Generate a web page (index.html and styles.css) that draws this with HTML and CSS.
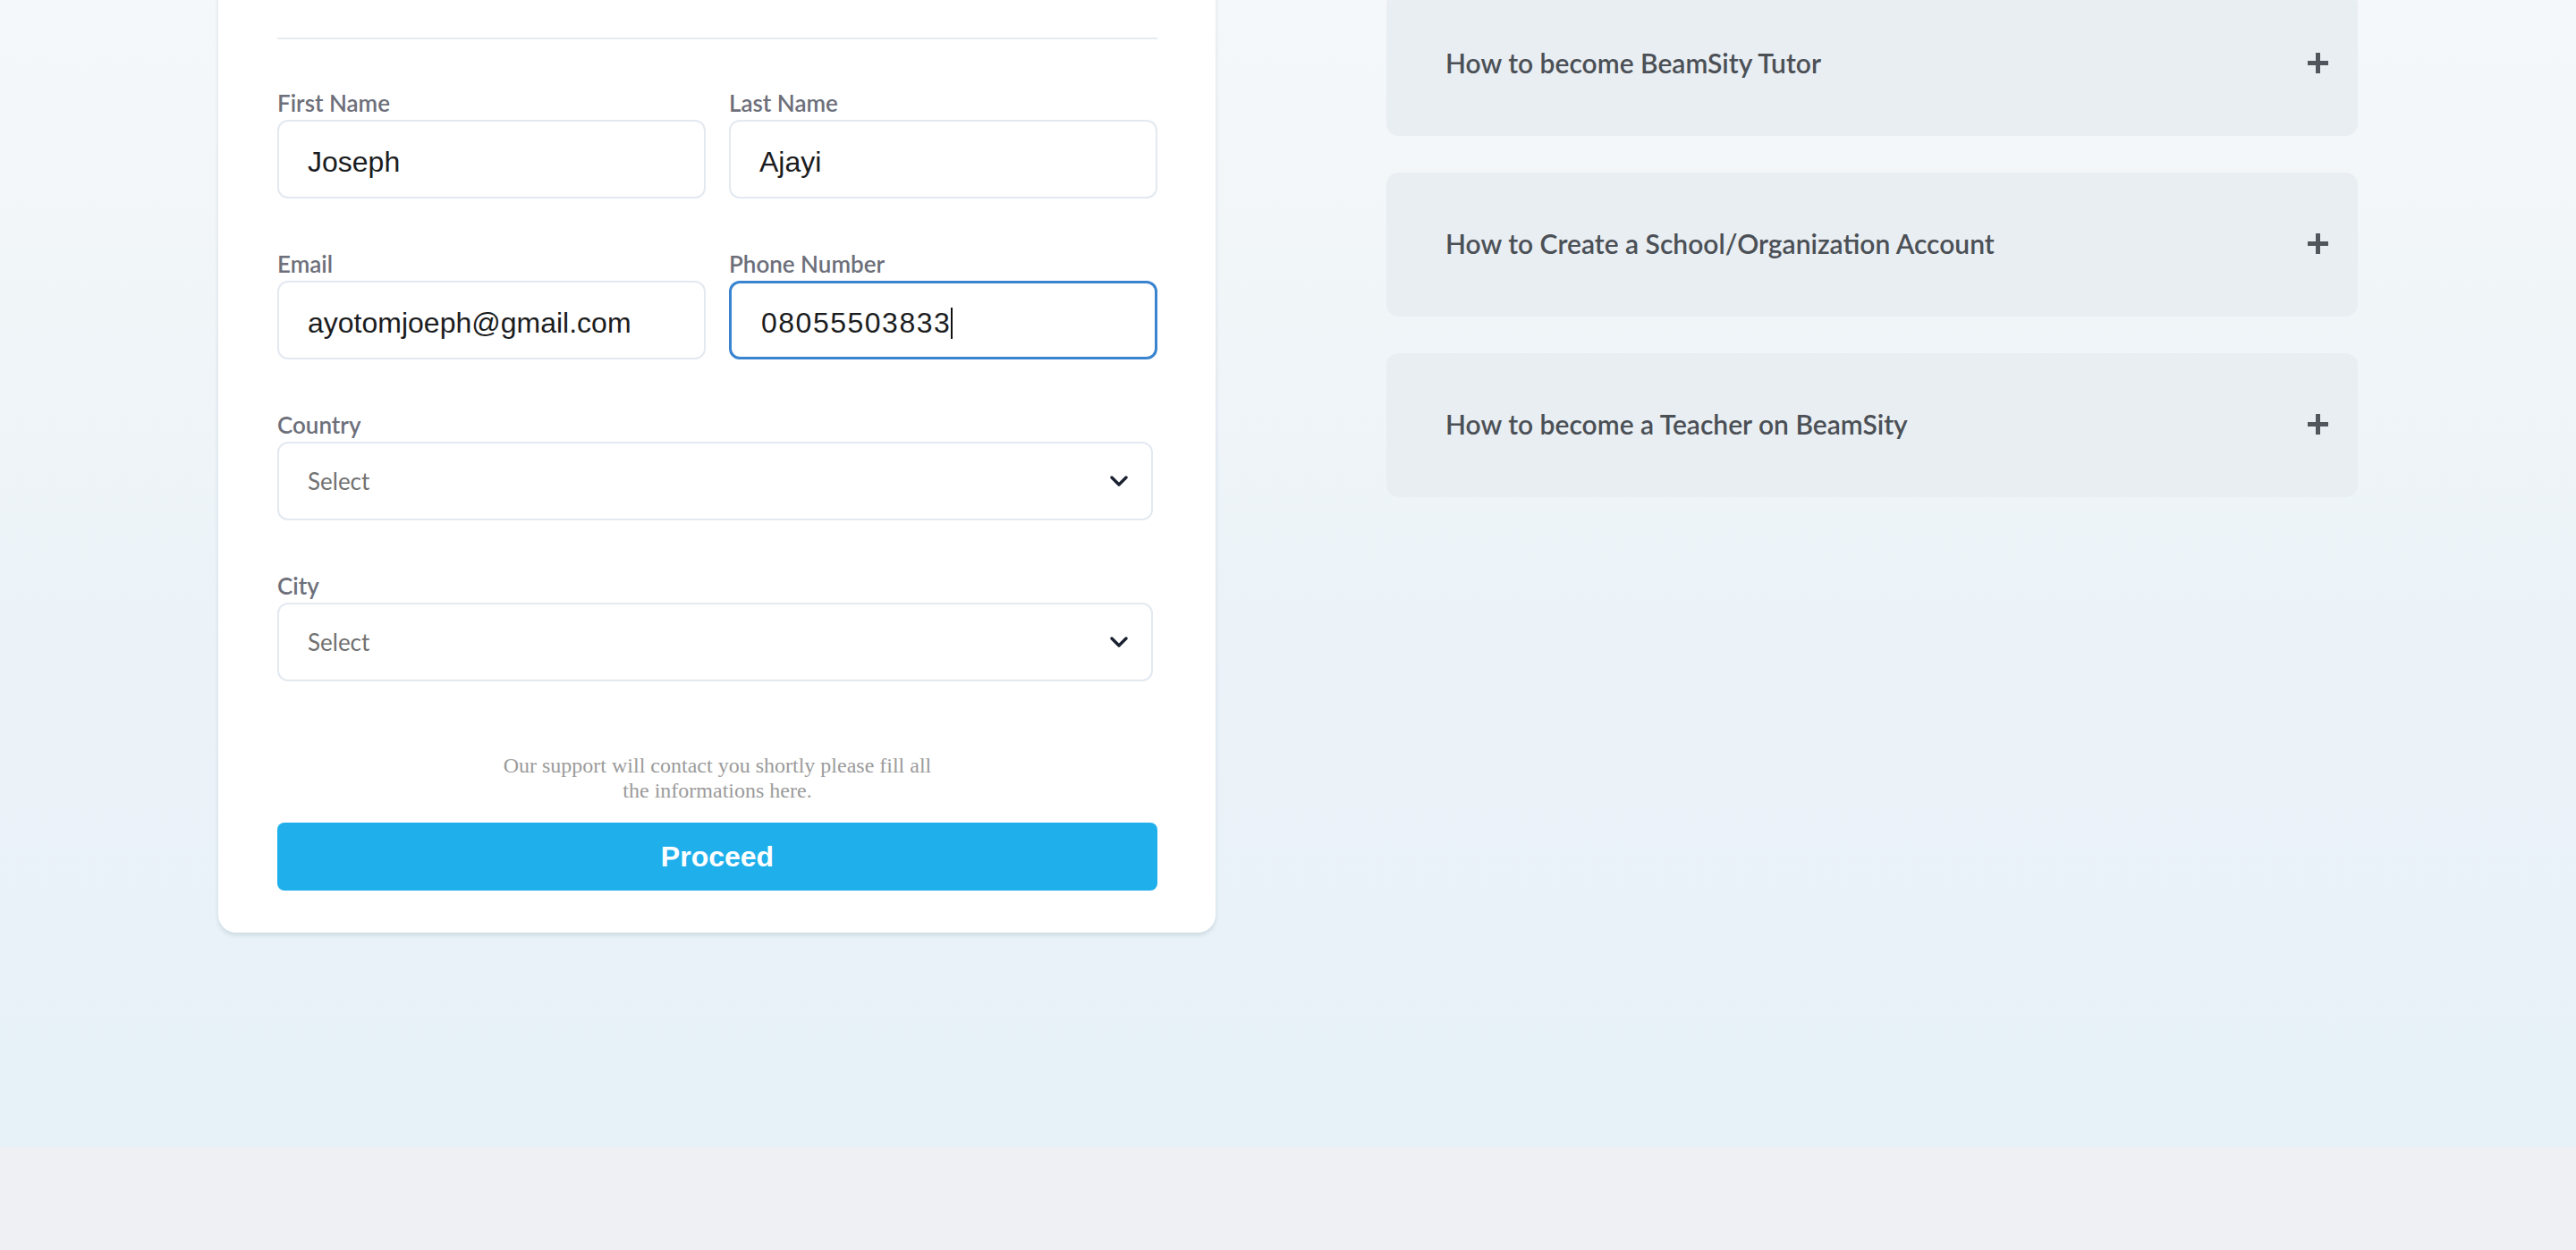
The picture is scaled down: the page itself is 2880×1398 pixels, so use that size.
FILE: index.html
```html
<!DOCTYPE html>
<html lang="en">
<head>
<meta charset="utf-8">
<title>BeamSity – Contact</title>
<link rel="stylesheet" href="styles.css">
</head>
<body>
<section class="hero">
  <div class="layout">
    <div class="card">
      <div class="card-head"></div>
      <div class="form-grid">
        <div class="field">
          <span class="label">First Name</span>
          <div class="input"><span class="value">Joseph</span></div>
        </div>
        <div class="field">
          <span class="label">Last Name</span>
          <div class="input"><span class="value">Ajayi</span></div>
        </div>
        <div class="field">
          <span class="label">Email</span>
          <div class="input"><span class="value">ayotomjoeph@gmail.com</span></div>
        </div>
        <div class="field">
          <span class="label">Phone Number</span>
          <div class="input focused"><span class="value digits">08055503833</span><span class="caret"></span></div>
        </div>
        <div class="field full">
          <span class="label">Country</span>
          <div class="select">
            <span class="placeholder">Select</span>
            <svg class="chevron" width="20" height="12" viewBox="0 0 20 12"><path d="M2 2 L10 10 L18 2" fill="none" stroke="#1a2130" stroke-width="3.4" stroke-linecap="round" stroke-linejoin="round"/></svg>
          </div>
        </div>
        <div class="field full">
          <span class="label">City</span>
          <div class="select">
            <span class="placeholder">Select</span>
            <svg class="chevron" width="20" height="12" viewBox="0 0 20 12"><path d="M2 2 L10 10 L18 2" fill="none" stroke="#1a2130" stroke-width="3.4" stroke-linecap="round" stroke-linejoin="round"/></svg>
          </div>
        </div>
      </div>
      <p class="note">Our support will contact you shortly please fill all the informations here.</p>
      <button class="proceed" type="button">Proceed</button>
    </div>

    <div class="faq">
      <div class="faq-item">
        <span class="faq-title">How to become BeamSity Tutor</span>
        <svg class="plus" width="23" height="23" viewBox="0 0 23 23"><rect x="9" y="0" width="5" height="23" fill="#50565c"/><rect x="0" y="9" width="23" height="5" fill="#50565c"/></svg>
      </div>
      <div class="faq-item">
        <span class="faq-title">How to Create a School/Organization Account</span>
        <svg class="plus" width="23" height="23" viewBox="0 0 23 23"><rect x="9" y="0" width="5" height="23" fill="#50565c"/><rect x="0" y="9" width="23" height="5" fill="#50565c"/></svg>
      </div>
      <div class="faq-item">
        <span class="faq-title">How to become a Teacher on BeamSity</span>
        <svg class="plus" width="23" height="23" viewBox="0 0 23 23"><rect x="9" y="0" width="5" height="23" fill="#50565c"/><rect x="0" y="9" width="23" height="5" fill="#50565c"/></svg>
      </div>
    </div>
  </div>
</section>
<div class="bottom"></div>
</body>
</html>
```

FILE: styles.css
```css
html, body {
  margin: 0;
  padding: 0;
}

body {
  background: #eff0f4;
  font-family: Lato, "Open Sans", sans-serif;
}

.hero {
  height: 1283px;
  overflow: hidden;
  background: linear-gradient(180deg, #f5f8fa 0%, #eef4f8 40%, #e6f1f8 100%);
}

.layout {
  display: flex;
  align-items: flex-start;
  gap: 191px;
  padding-left: 244px;
  margin-top: -24px;
}

.card {
  width: 1115px;
  box-sizing: border-box;
  padding: 0 65px 47px 66px;
  background: #ffffff;
  border-radius: 20px;
  box-shadow: 0 3px 5px rgba(40, 70, 100, 0.14);
}

.card-head {
  height: 66px;
  border-bottom: 2px solid #e6ebf0;
}

.form-grid {
  display: grid;
  grid-template-columns: 1fr 1fr;
  column-gap: 26px;
  row-gap: 54px;
  margin-top: 52px;
}

.field {
  display: flex;
  flex-direction: column;
  gap: 2px;
}

.field.full {
  grid-column: 1 / -1;
}

.label {
  font-family: Lato, sans-serif;
  font-weight: 600;
  font-size: 26px;
  line-height: 34px;
  padding-top: 2px;
  color: #6d6f7a;
}

.input {
  height: 88px;
  box-sizing: border-box;
  border: 2px solid #e3e9f0;
  border-radius: 12px;
  background: #fff;
  display: flex;
  align-items: center;
  padding: 6px 0 0 32px;
  font-family: "Liberation Sans", Arial, sans-serif;
  font-size: 32px;
  color: #1b1c20;
}

.input.focused {
  border: 3px solid #3a84cf;
  padding-left: 33px;
}

.digits {
  letter-spacing: 1.5px;
}

.caret {
  display: inline-block;
  width: 2px;
  height: 35px;
  background: #111;
  margin-left: 0;
}

.select {
  width: 979px;
  height: 88px;
  box-sizing: border-box;
  border: 2px solid #e3e9f0;
  border-radius: 12px;
  background: #fff;
  display: flex;
  align-items: center;
  justify-content: space-between;
  padding: 0 26px 0 32px;
}

.placeholder {
  font-family: Lato, sans-serif;
  font-size: 26px;
  color: #717171;
}

.note {
  max-width: 500px;
  margin: 80px auto 22px;
  text-align: center;
  font-family: "Liberation Serif", "Times New Roman", serif;
  font-size: 24px;
  line-height: 28px;
  color: #9b9b9b;
}

.proceed {
  display: block;
  width: 100%;
  height: 76px;
  border: 0;
  border-radius: 8px;
  background: #1fb0ec;
  color: #ffffff;
  font-family: "Liberation Sans", Arial, sans-serif;
  font-weight: 700;
  font-size: 32px;
  padding: 0;
}

.faq {
  width: 1086px;
  margin-top: 15px;
  display: flex;
  flex-direction: column;
  gap: 41px;
}

.faq-item {
  height: 161px;
  box-sizing: border-box;
  display: flex;
  align-items: center;
  justify-content: space-between;
  padding: 0 33px 3px 66px;
  background: #e9eef2;
  border-radius: 14px;
}

.faq-title {
  font-family: Lato, sans-serif;
  font-weight: 600;
  font-size: 30px;
  color: #4b5056;
}

.bottom {
  height: 115px;
  background: #eff0f4;
}
```
